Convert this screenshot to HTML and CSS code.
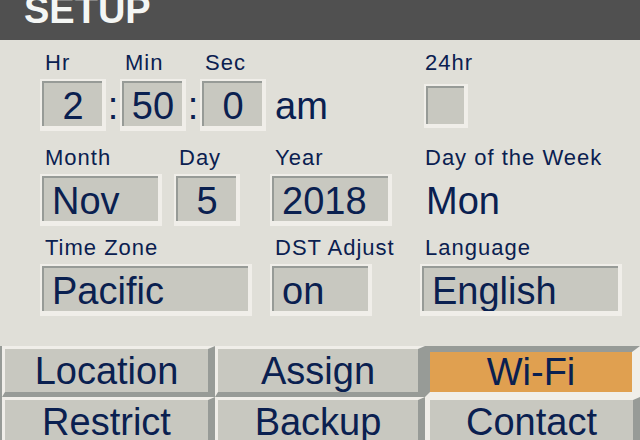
FILE: index.html
```html
<!DOCTYPE html>
<html>
    <head>
        <meta charset="UTF-8">
        <title>Setup</title>
        <link rel="stylesheet" href="styles.css">
    </head>
    <body>
        <header class="topbar">
            <h1>SETUP</h1>
        </header>

        <main class="form">
            <!-- Time row -->
            <div class="row row-time">
                <div class="time-group">
                    <div class="field">
                        <div class="label">Hr</div>
                        <div class="box box-sm"><div class="box-in center">2</div></div>
                    </div>
                    <span class="inline-text colon">:</span>
                    <div class="field">
                        <div class="label">Min</div>
                        <div class="box box-sm"><div class="box-in center">50</div></div>
                    </div>
                    <span class="inline-text colon">:</span>
                    <div class="field">
                        <div class="label">Sec</div>
                        <div class="box box-sm"><div class="box-in center">0</div></div>
                    </div>
                    <span class="inline-text ampm">am</span>
                </div>
                <div class="field">
                    <div class="label">24hr</div>
                    <div class="box box-check"><div class="box-in"></div></div>
                </div>
            </div>

            <!-- Date row -->
            <div class="row row-date">
                <div class="pair">
                    <div class="field">
                        <div class="label">Month</div>
                        <div class="box box-md"><div class="box-in">Nov</div></div>
                    </div>
                    <div class="field">
                        <div class="label">Day</div>
                        <div class="box box-sm"><div class="box-in center">5</div></div>
                    </div>
                </div>
                <div class="field">
                    <div class="label">Year</div>
                    <div class="box box-md"><div class="box-in">2018</div></div>
                </div>
                <div class="field">
                    <div class="label">Day of the Week</div>
                    <span class="inline-text dow">Mon</span>
                </div>
            </div>

            <!-- Zone row -->
            <div class="row row-zone">
                <div class="field">
                    <div class="label">Time Zone</div>
                    <div class="box box-lg"><div class="box-in">Pacific</div></div>
                </div>
                <div class="field">
                    <div class="label">DST Adjust</div>
                    <div class="box box-dst"><div class="box-in">on</div></div>
                </div>
                <div class="field">
                    <div class="label">Language</div>
                    <div class="box box-lang"><div class="box-in">English</div></div>
                </div>
            </div>
        </main>

        <nav class="menu">
            <div class="btn">Location</div>
            <div class="btn">Assign</div>
            <div class="btn btn-active">Wi-Fi</div>
            <div class="btn">Restrict</div>
            <div class="btn">Backup</div>
            <div class="btn btn-last">Contact</div>
        </nav>
    </body>
</html>
```

FILE: styles.css
```css
body {
    margin: 0;
    width: 640px;
    height: 440px;
    overflow: hidden;
    background-color: #e0dfd8;
    color: #0a2050;
    font-family: "Liberation Sans", Arial, sans-serif;
}

/* Title bar, text runs off the top edge */
.topbar {
    height: 40px;
    background-color: #505050;
    overflow: hidden;
}

.topbar h1 {
    margin: -9px 0 0 24px;
    font-size: 38px;
    line-height: 38px;
    font-weight: bold;
    color: #f4f6f4;
}

.form {
    padding: 12px 0 0 40px;
}

.row {
    display: grid;
    grid-template-columns: 230px 150px 1fr;
}

.row-date {
    margin-top: 16px;
}

.row-zone {
    margin-top: 11px;
}

.time-group {
    grid-column: 1 / 3;
    display: flex;
    align-items: flex-end;
}

.pair {
    display: flex;
    gap: 12px;
}

.field {
    display: flex;
    flex-direction: column;
    align-items: flex-start;
}

.label {
    height: 22px;
    padding-left: 5px;
    margin-bottom: 5px;
    font-size: 22px;
    line-height: 22px;
    letter-spacing: 1px;
    white-space: nowrap;
}

/* Sunken value boxes */
.box {
    box-sizing: border-box;
    height: 52px;
    padding: 2px 4px 5px 2px;
    background-color: #f0eee9;
}

.box-in {
    box-sizing: border-box;
    height: 100%;
    padding: 1px 0 0 8px;
    border-top: 2px solid #979b97;
    border-left: 2px solid #979b97;
    background-color: #c8c8c0;
    font-size: 38px;
    line-height: 44px;
    white-space: nowrap;
    overflow: hidden;
}

.box-in.center {
    padding-left: 0;
    text-align: center;
}

.box-sm { width: 66px; }
.box-md { width: 122px; }
.box-lg { width: 212px; }
.box-dst { width: 102px; }
.box-lang { width: 202px; }

.box-check {
    width: 44px;
    height: 44px;
    margin: 5px 0 0 4px;
    padding: 2px 4px 4px 2px;
}

.inline-text {
    box-sizing: border-box;
    height: 52px;
    padding-top: 5px;
    font-size: 38px;
    line-height: 44px;
}

.colon {
    width: 14px;
    text-align: center;
}

.ampm {
    margin-left: 9px;
}

.dow {
    padding-left: 6px;
}

/* Bottom menu buttons */
.menu {
    margin-top: 30px;
    display: grid;
    grid-template-columns: 213px 210px 1fr;
    padding-left: 2px;
    background-color: #979b97;
}

.btn {
    box-sizing: border-box;
    height: 51px;
    padding-top: 2px;
    border-style: solid;
    border-width: 3px 7px 5px 3px;
    border-color: #f0eee9 #979b97 #979b97 #f0eee9;
    background-color: #c8c8c0;
    text-align: center;
    font-size: 38px;
    line-height: 41px;
}

.btn-active {
    padding-top: 0;
    border-width: 6px 8px 5px 5px;
    border-color: #979b97 #f0eee9 #f0eee9 #979b97;
    background-color: #e0a050;
    line-height: 40px;
}

.btn-last {
    border-left-width: 5px;
}
```
